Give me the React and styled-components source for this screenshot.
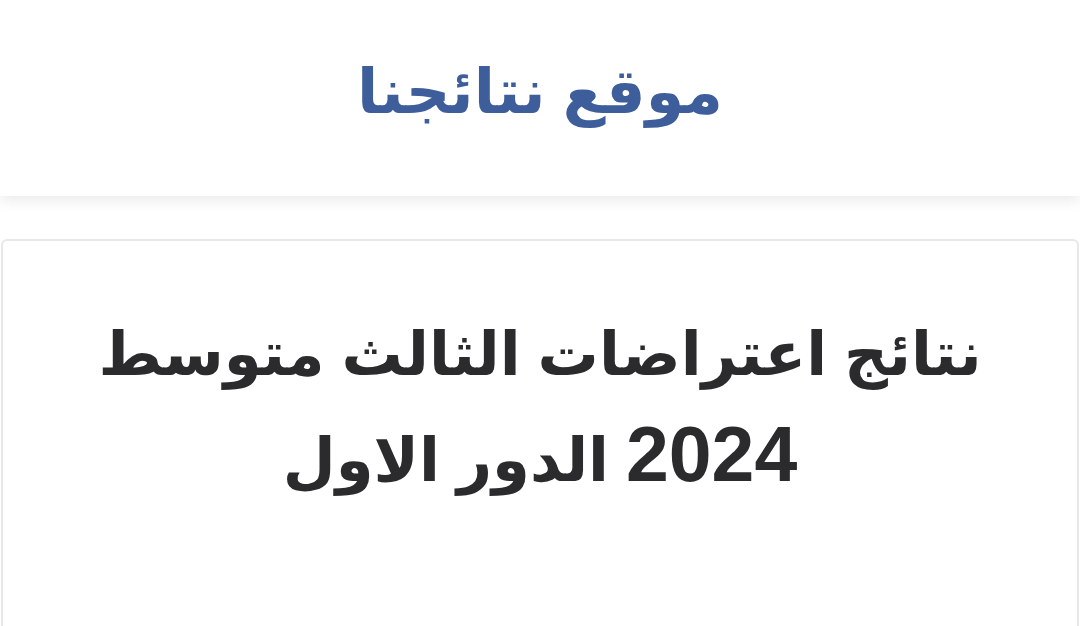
import styled, { createGlobalStyle } from "styled-components";

const GlobalStyle = createGlobalStyle`
  html, body {
    margin: 0;
    padding: 0;
    background: #ffffff;
  }
  body {
    font-family: "Liberation Sans", "DejaVu Sans", sans-serif;
  }
`;

const Page = styled.div`
  direction: rtl;
  width: 1080px;
  height: 626px;
  overflow: hidden;
  background: #ffffff;
`;

const Header = styled.header`
  display: flex;
  align-items: center;
  justify-content: center;
  height: 196px;
  background: #ffffff;
  box-shadow: 0 4px 14px rgba(0, 0, 0, 0.09);
  position: relative;
  z-index: 1;
`;

const SiteTitle = styled.h1`
  margin: 0 0 14px;
  font-size: 62px;
  font-weight: bold;
  color: #3d5d9b;
`;

const Main = styled.main`
  padding: 43px 1px 0;
`;

const Card = styled.article`
  border: 2px solid #e8e8e8;
  border-bottom: none;
  border-radius: 6px 6px 0 0;
  padding: 60px 60px 120px;
  background: #ffffff;
`;

const PostTitle = styled.h2`
  margin: 0;
  text-align: center;
  font-size: 61px;
  line-height: 106px;
  font-weight: bold;
  color: #2b2b2d;
`;

const Year = styled.span`
  font-size: 77px;
  line-height: 0;
`;

export default function App() {
  return (
    <>
      <GlobalStyle />
      <Page>
        <Header>
          <SiteTitle>موقع نتائجنا</SiteTitle>
        </Header>
        <Main>
          <Card>
            <PostTitle>
              نتائج اعتراضات الثالث متوسط <Year>2024</Year> الدور الاول
            </PostTitle>
          </Card>
        </Main>
      </Page>
    </>
  );
}
